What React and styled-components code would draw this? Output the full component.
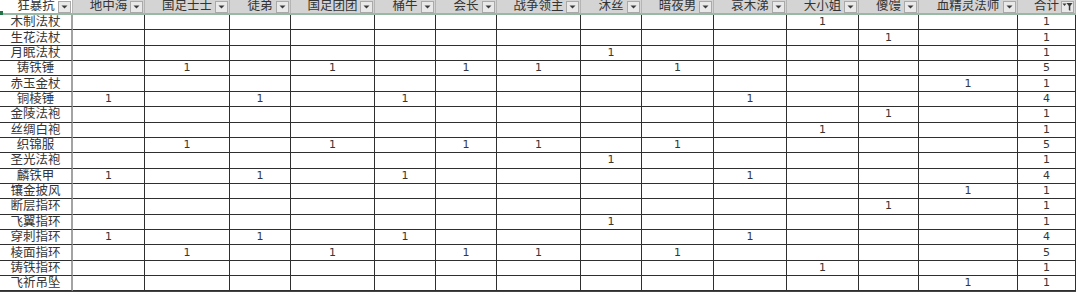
import React from "react";
import styled, { createGlobalStyle } from "styled-components";

const GlobalStyle = createGlobalStyle`
  html, body {
    margin: 0;
    padding: 0;
    background: #fff;
  }
  body {
    font-family: "Liberation Sans", "Noto Sans CJK SC", sans-serif;
    color: #2b2b2b;
  }
`;

const COLUMNS = [
  { title: "狂暴抗", width: 73 },
  { title: "地中海", width: 72 },
  { title: "国足士士", width: 85 },
  { title: "徒弟", width: 61 },
  { title: "国足团团", width: 84 },
  { title: "桶牛", width: 61 },
  { title: "会长", width: 61 },
  { title: "战争领主", width: 84 },
  { title: "沐丝", width: 61 },
  { title: "暗夜男", width: 72 },
  { title: "哀木涕", width: 73 },
  { title: "大小姐", width: 72 },
  { title: "傻馒", width: 60 },
  { title: "血精灵法师", width: 99 },
  { title: "合计", width: 58 },
];

// column indices that hold a 1 for each item
const ROWS = [
  ["木制法杖", [11]],
  ["生花法杖", [12]],
  ["月眠法杖", [8]],
  ["铸铁锤", [2, 4, 6, 7, 9]],
  ["赤玉金杖", [13]],
  ["铜棱锤", [1, 3, 5, 10]],
  ["金陵法袍", [12]],
  ["丝绸白袍", [11]],
  ["织锦服", [2, 4, 6, 7, 9]],
  ["圣光法袍", [8]],
  ["麟铁甲", [1, 3, 5, 10]],
  ["镶金披风", [13]],
  ["断层指环", [12]],
  ["飞翼指环", [8]],
  ["穿刺指环", [1, 3, 5, 10]],
  ["棱面指环", [2, 4, 6, 7, 9]],
  ["铸铁指环", [11]],
  ["飞祈吊坠", [13]],
];

const Sheet = styled.div`
  display: grid;
  grid-template-columns: ${COLUMNS.map((c) => `${c.width}px`).join(" ")};
  grid-template-rows: 15px repeat(${ROWS.length}, 15.37px);
  width: 1076px;
  border-bottom: 1px solid #444;
`;

const HeaderCell = styled.div`
  position: relative;
  box-sizing: border-box;
  display: flex;
  align-items: center;
  padding: 0 1px 1px 14px;
  background: ${({ $plain }) => ($plain ? "#fff" : "#d4d4d4")};
  border-bottom: 2px solid #98b9a4;
  border-right: 1px solid #b4b4b4;
  font-family: "Liberation Sans", "Noto Sans CJK SC", sans-serif;
  font-size: 12.5px;
  line-height: 12px;
  color: #333;
`;

const HeaderLabel = styled.span`
  flex: 1;
  text-align: center;
  white-space: nowrap;
`;

const FilterButton = styled.div`
  box-sizing: border-box;
  width: 13px;
  height: 12px;
  flex: none;
  display: flex;
  align-items: center;
  justify-content: center;
  margin-top: 1px;
  background: #e9e9e9;
  border: 1px solid #a9a9a9;
`;

const SelectMark = styled.div`
  position: absolute;
  left: 0;
  bottom: -2px;
  width: 3px;
  height: 4px;
  background: #217346;
`;

const Cell = styled.div`
  box-sizing: border-box;
  display: flex;
  align-items: center;
  justify-content: center;
  border-bottom: 1px solid #2f2f2f;
  border-right: ${({ $name }) => ($name ? "2px solid #a3a3a3" : "1px solid #2f2f2f")};
  font-family: ${({ $name }) =>
    $name
      ? `"Liberation Sans", "Noto Sans CJK SC", sans-serif`
      : `"DejaVu Sans", "Liberation Sans", sans-serif`};
  font-size: ${({ $name }) => ($name ? "12.5px" : "11px")};
  line-height: 14px;
  color: #363636;
  white-space: nowrap;
`;

const Arrow = () => (
  <svg width="7" height="4" viewBox="0 0 7 4">
    <path d="M0.5 0.5 L6.5 0.5 L3.5 3.5 Z" fill="#3a3a3a" />
  </svg>
);

const FunnelArrow = () => (
  <svg width="11" height="10" viewBox="0 0 11 10">
    <path d="M0.5 1.5 L4.5 1.5 L2.5 4 Z" fill="#3a3a3a" />
    <path d="M4.5 1 L10.5 1 L8.3 4 L8.3 9 L6.8 8 L6.8 4 Z" fill="#3a3a3a" />
  </svg>
);

export default function App() {
  const last = COLUMNS.length - 1;
  return (
    <>
      <GlobalStyle />
      <Sheet>
        {COLUMNS.map((col, i) => (
          <HeaderCell key={col.title} $plain={i === 0}>
            {i === 0 && <SelectMark />}
            <HeaderLabel>{col.title}</HeaderLabel>
            <FilterButton>{i === last ? <FunnelArrow /> : <Arrow />}</FilterButton>
          </HeaderCell>
        ))}
        {ROWS.map(([name, marks]) =>
          COLUMNS.map((col, i) => {
            let value = "";
            if (i === 0) value = name;
            else if (i === last) value = marks.length;
            else if (marks.includes(i)) value = 1;
            return (
              <Cell key={`${name}-${i}`} $name={i === 0}>
                {value}
              </Cell>
            );
          })
        )}
      </Sheet>
    </>
  );
}
